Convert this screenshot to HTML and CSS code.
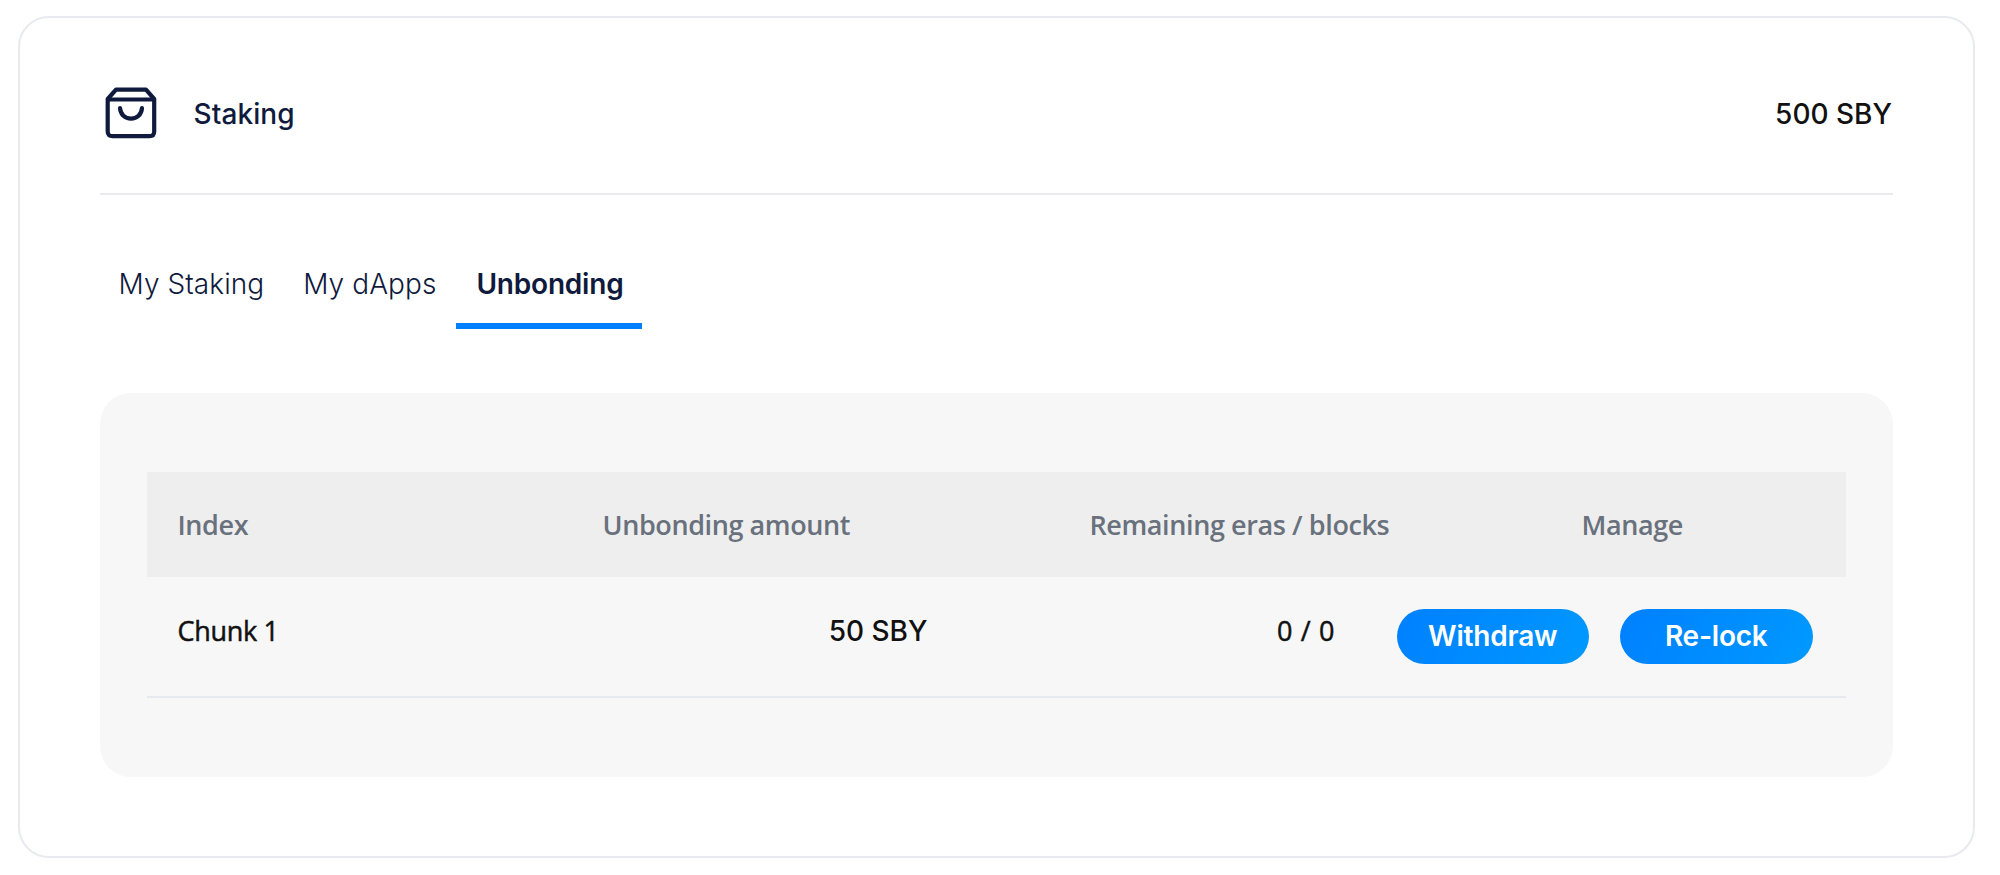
FILE: index.html
```html
<!DOCTYPE html>
<html lang="en">
<head>
<meta charset="utf-8">
<title>Staking</title>
<link rel="stylesheet" href="styles.css">
</head>
<body>
<main class="card">
  <header class="card-header">
    <svg class="bag" viewBox="0 0 52 52" fill="none" stroke="#0f1a3d" stroke-width="4.2" stroke-linecap="round" stroke-linejoin="round">
      <path d="M2.700 12 11 2.700H41L49.200 12V44.500Q49.200 49.200 44.500 49.200H7.500Q2.700 49.200 2.700 44.500Z"/>
      <path d="M3.500 12.500H48.500"/>
      <path d="M15 21C15.500 27.500 20 31.700 26 31.700S36.500 27.500 37 21"/>
    </svg>
    <h1 class="title">Staking</h1>
    <span class="total">500 SBY</span>
  </header>
  <nav class="tabs">
    <a class="tab">My Staking</a>
    <a class="tab">My dApps</a>
    <a class="tab active">Unbonding</a>
  </nav>
  <section class="panel">
    <div class="row head">
      <span class="cell">Index</span>
      <span class="cell h-amount">Unbonding amount</span>
      <span class="cell h-eras">Remaining eras / blocks</span>
      <span class="cell h-manage">Manage</span>
    </div>
    <div class="row item">
      <span class="cell chunk">Chunk 1</span>
      <span class="cell amount">50 SBY</span>
      <span class="cell eras">0 / 0</span>
      <div class="cell actions">
        <button class="btn">Withdraw</button>
        <button class="btn relock">Re-lock</button>
      </div>
    </div>
  </section>
</main>
</body>
</html>
```
FILE: styles.css
```css
* { box-sizing: border-box; }
body {
  margin: 0;
  padding: 16px 25px 17px 18px;
  height: 875px;
  background: #fff;
  font-family: Inter, "Liberation Sans", sans-serif;
  font-size: 28px;
  line-height: 40px;
  color: #0f1a3d;
}
.card {
  height: 842px;
  padding: 0 80px 0 79.500px;
  border: 2px solid #e8eaf0;
  border-radius: 31px;
}
.card-header {
  display: flex;
  align-items: center;
  height: 177px;
  padding: 16px 1px 0 5px;
  border-bottom: 2px solid #e8eaf0;
}
.bag { width: 52px; height: 52px; margin-top: -1px; }
.title { margin: 0 0 0 37px; font-size: 28px; font-weight: 500; letter-spacing: 0.1px; }
.total { margin-left: auto; font-weight: 500; color: #111; }
.tabs { display: flex; height: 134px; padding-top: 69px; }
.tab {
  height: 65px;
  padding: 0 20px 0 19px;
  font-weight: 300;
  letter-spacing: 0.07px;
  white-space: nowrap;
}
.tab.active { padding: 0 19px 0 20px; font-weight: 600; letter-spacing: -0.2px; border-bottom: 6px solid #0080ff; }
.panel {
  height: 384px;
  margin-top: 64px;
  padding: 79px 47px 0;
  border-radius: 31px;
  background: #f7f7f7;
}
.row { display: grid; font-family: "Open Sans", "Noto Sans", sans-serif; font-size: 27px; }
.cell { white-space: nowrap; padding: 0 31px; }
.head {
  grid-template-columns: 425px 487px 492px 1fr;
  height: 105px;
  align-items: center;
  background: #eee;
  color: #69717d;
  font-weight: 600;
  letter-spacing: -0.4px;
}
.item {
  grid-template-columns: 425px 387px 407px 1fr;
  height: 121px;
  padding-top: 34px;
  border-bottom: 2px solid #e6eaee;
  color: #111;
  font-weight: 500;
}
.chunk, .eras { -webkit-text-stroke: 0.5px #111; }
.chunk { letter-spacing: -0.3px; }
.amount { font-family: Inter, sans-serif; font-size: 28px; text-align: right; }
.eras { text-align: right; word-spacing: 1.3px; }
.actions { display: flex; gap: 31px; margin-top: -2px; }
.btn {
  width: 192.500px;
  height: 55px;
  padding: 0;
  border: 0;
  border-radius: 28px;
  background: linear-gradient(120deg, #0080ff, #0099ff);
  color: #fff;
  font: 600 28px/55px Inter, sans-serif;
  letter-spacing: -0.2px;
}
```
